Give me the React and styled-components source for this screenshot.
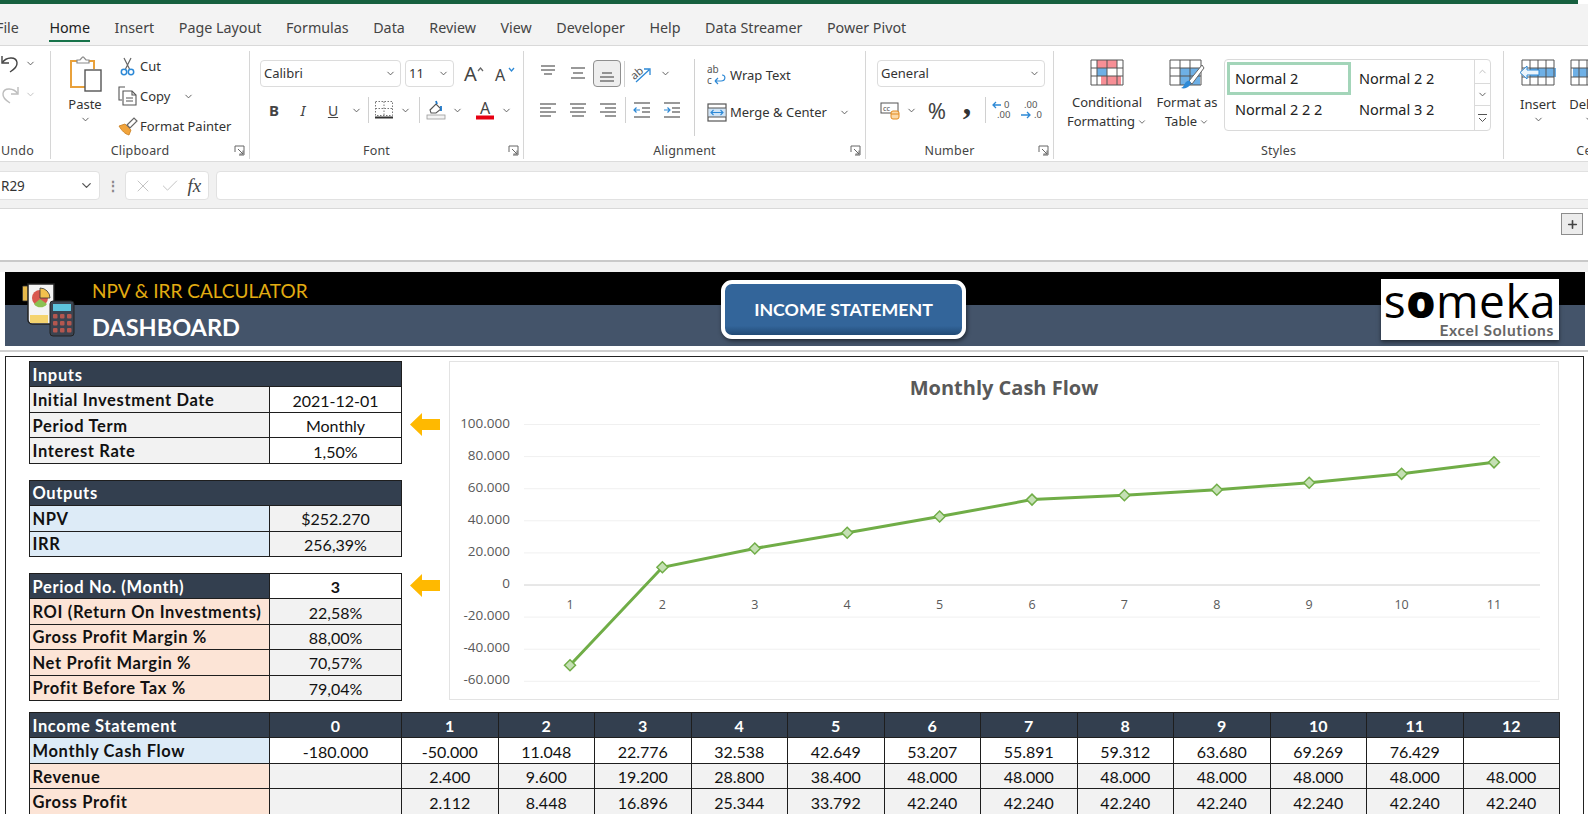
import React from 'react'
import styled, { createGlobalStyle } from 'styled-components'
import { ChevronDown, ChevronUp, X, Check, Plus } from 'lucide-react'

const UI_FONT = '"Noto Sans", "Open Sans", sans-serif'
const SHEET_FONT = 'Lato, "Open Sans", sans-serif'

const GlobalStyle = createGlobalStyle`
  html, body { margin: 0; padding: 0; height: 814px; overflow: hidden; background: #fff; }
  * { box-sizing: border-box; }
`

const Page = styled.div`
  width: 1588px;
  height: 814px;
  overflow: hidden;
  background: #fff;
  font-family: ${UI_FONT};
  color: #333;
`
const TopLine = styled.div`
  height: 4px;
  width: 1578px;
  background: #17603f;
`
const TabBar = styled.div`
  display: flex;
  align-items: center;
  gap: 24.5px;
  height: 42px;
  padding-top: 6px;
  background: #f3f3f3;
  border-bottom: 1px solid #d9d9d9;
  overflow: hidden;
`
const Tab = styled.div`
  position: relative;
  flex: none;
  margin-left: ${p => p.$offset || 0}px;
  font-size: 14.3px;
  line-height: 20px;
  color: ${p => (p.$active ? '#222' : '#444')};
  &::after {
    content: '';
    display: ${p => (p.$active ? 'block' : 'none')};
    position: absolute;
    left: 0;
    right: 0;
    bottom: -4px;
    height: 2px;
    background: #17734a;
  }
`
const Ribbon = styled.div`
  display: flex;
  height: 115px;
  padding: 5px 0 2px;
  background: #fff;
  overflow: hidden;
`
const Group = styled.div`
  flex: none;
  display: flex;
  flex-direction: column;
  width: ${p => p.$width}px;
  border-right: 1px solid ${p => (p.$last ? 'transparent' : '#d6d6d6')};
`
const GroupBody = styled.div`
  flex: 1;
  display: flex;
  min-height: 0;
  padding: ${p => p.$top || 0}px 0 0 ${p => p.$left || 0}px;
`
const GroupFooter = styled.div`
  display: grid;
  grid-template-columns: 1fr auto 1fr;
  align-items: center;
  height: 18px;
  padding-right: ${p => p.$reserve || 0}px;
  font-size: 12.5px;
  color: #444;
`
const FooterLabel = styled.span`
  grid-column: 2;
  letter-spacing: 0.2px;
`
const Launcher = styled.svg`
  grid-column: 3;
  justify-self: end;
  margin-right: -16px;
`
const Stack = styled.div`
  flex: none;
  display: flex;
  flex-direction: column;
  width: ${p => (p.$w ? `${p.$w}px` : 'auto')};
  gap: ${p => p.$gap || 0}px;
`
const IconRow = styled.div`
  display: flex;
  align-items: center;
  height: ${p => p.$height || 24}px;
  margin-top: ${p => p.$top || 0}px;
`
const Slot = styled.div`
  flex: none;
  display: flex;
  align-items: center;
  justify-content: center;
  width: ${p => p.$w}px;
  height: 100%;
  color: #444;
  font-size: ${p => p.$size || 14}px;
`
const PressedSlot = styled(Slot)`
  height: 27px;
  background: #eeeeee;
  border: 1px solid #8f8f8f;
  border-radius: 4px;
`
const CommaMark = styled.span`
  margin-top: -15px;
  font-family: "Liberation Serif", serif;
  font-size: 34px;
  font-weight: 700;
  line-height: 24px;
  color: #333;
`
const Divider = styled.div`
  flex: none;
  width: ${p => p.$w || 8}px;
  height: 26px;
  display: flex;
  justify-content: center;
  &::before { content: ''; width: 1px; background: #d0d0d0; }
`
const SelectBox = styled.div`
  flex: none;
  display: flex;
  align-items: center;
  justify-content: space-between;
  width: ${p => p.$w}px;
  height: 27px;
  margin-right: ${p => p.$mr || 0}px;
  padding: 0 4px 1px 3px;
  background: #fff;
  border: 1px solid #dcdcdc;
  border-radius: 4px;
  font-size: 13px;
  color: #333;
`
const SmallButton = styled.div`
  flex: none;
  display: flex;
  align-items: center;
  height: 30px;
  font-size: 13px;
  color: #333;
  white-space: nowrap;
`
const SmallIcon = styled.span`
  flex: none;
  display: flex;
  justify-content: center;
  width: ${p => p.$w || 25}px;
  margin: 0 ${p => p.$mr || 0}px 0 ${p => p.$ml || 0}px;
`
const TallButton = styled.div`
  flex: none;
  display: flex;
  flex-direction: column;
  align-items: center;
  width: ${p => p.$w}px;
  font-size: 13px;
  line-height: 19px;
  color: #333;
  text-align: center;
  white-space: nowrap;
`
const TallCaption = styled.div`
  margin-top: ${p => p.$top ?? 6}px;
  display: flex;
  align-items: center;
  gap: 2px;
`
const PasteButton = styled(TallButton)`
  margin: 4px 5px 0 9px;
`
const IconHolder = styled.div`
  height: 27px;
  margin-top: 8px;
  display: flex;
  align-items: flex-start;
`
const VerticalRule = styled.div`
  flex: none;
  width: 1px;
  height: 77px;
  margin-top: -1px;
  background: #d0d0d0;
`
const Gallery = styled.div`
  flex: none;
  display: grid;
  grid-template-columns: 1fr 16px;
  width: 267px;
  height: 72px;
  margin: 8px 0 0 2px;
  border: 1px solid #dadada;
  border-radius: 4px;
`
const GalleryGrid = styled.div`
  display: grid;
  grid-template-columns: 124px 1fr;
  grid-template-rows: 33px 30px;
  padding: 2px 0 0 2px;
`
const StyleTile = styled.div`
  display: flex;
  align-items: center;
  padding: 0 0 2px ${p => (p.$selected ? 5 : 8)}px;
  border: ${p => (p.$selected ? '3px solid #a3d5b9' : 'none')};
  font-size: 14.5px;
  color: #222;
`
const GalleryScroll = styled.div`
  display: grid;
  grid-template-rows: 23px 22px 1fr;
  border-left: 1px solid #dadada;
`
const ScrollPart = styled.div`
  display: flex;
  align-items: center;
  justify-content: center;
  color: ${p => (p.$muted ? '#bbb' : '#555')};
  & + & { border-top: 1px solid #dadada; }
`
const FormulaBar = styled.div`
  display: flex;
  align-items: center;
  height: 47px;
  padding-top: 1px;
  background: #f1f1f1;
  border-top: 1px solid #dcdcdc;
  overflow: hidden;
`
const FieldBox = styled.div`
  flex: none;
  display: flex;
  align-items: center;
  height: 29px;
  background: #fff;
  border: 1px solid #e1e1e1;
  border-radius: 4px;
`
const NameBox = styled(FieldBox)`
  justify-content: space-between;
  width: 110px;
  margin-left: -10px;
  padding: 0 5px 0 10px;
  font-size: 13.5px;
`
const GripDots = styled.div`
  flex: none;
  width: 25px;
  text-align: center;
  font-size: 14px;
  font-weight: 700;
  color: #888;
`
const EditBox = styled(FieldBox)`
  justify-content: space-around;
  width: 84px;
  padding: 0 3px;
  margin-right: 7px;
  color: #c4c4c4;
`
const FxLabel = styled.span`
  font-family: "Liberation Serif", serif;
  font-style: italic;
  font-size: 19px;
  color: #444;
`
const FormulaInput = styled(FieldBox)`
  flex: 1;
  margin-right: -10px;
`
const WhiteStrip = styled.div`
  display: flex;
  justify-content: flex-end;
  height: 54px;
  padding: 4px 5px 0 0;
  border-top: 1px solid #d8d8d8;
  border-bottom: 2px solid #c9c9c9;
`
const ExpandButton = styled.div`
  display: flex;
  align-items: center;
  justify-content: center;
  width: 22px;
  height: 22px;
  background: #ececec;
  border: 1px solid #8d8d8d;
  color: #444;
`
const SheetGap = styled.div`
  height: 10px;
  background: #f1f1f1;
`
const SheetHeader = styled.div`
  display: grid;
  grid-template-columns: 70px 629px 245px 1fr;
  align-items: center;
  height: 74px;
  margin: 0 3px 0 5px;
  padding-left: 17px;
  background: linear-gradient(#000 0 33.5px, #44546a 33.5px);
  font-family: ${SHEET_FONT};
`
const TitleColumn = styled.div`
  display: flex;
  flex-direction: column;
  gap: 10px;
  margin-top: 1px;
`
const AppName = styled.div`
  font-size: 19px;
  line-height: 24px;
  color: #e2ac12;
`
const PageName = styled.div`
  font-size: 23.5px;
  line-height: 28px;
  font-weight: 700;
  color: #fff;
`
const NavButton = styled.div`
  display: flex;
  align-items: center;
  justify-content: center;
  width: 245px;
  height: 59px;
  background: linear-gradient(#33659a 0 82%, #214a75);
  border: 4px solid #fff;
  border-radius: 11px;
  box-shadow: 1px 2px 4px rgba(0, 0, 0, 0.5);
  color: #fff;
  font-size: 17.8px;
  font-weight: 700;
`
const Logo = styled.div`
  justify-self: end;
  display: flex;
  flex-direction: column;
  align-items: center;
  width: 178px;
  height: 61px;
  margin-right: 26px;
  background: #fff;
  box-shadow: 0 2px 4px rgba(0, 0, 0, 0.5);
  font-family: "Open Sans", sans-serif;
  color: #000;
`
const LogoWord = styled.div`
  font-size: 46px;
  line-height: 42px;
  letter-spacing: 0.5px;
`
const LogoRing = styled.span`
  font-weight: 800;
`
const LogoTag = styled.div`
  align-self: flex-end;
  margin: 1px 5px 0 0;
  font-family: ${SHEET_FONT};
  font-size: 15.5px;
  line-height: 16px;
  font-weight: 700;
  letter-spacing: 0.7px;
  color: #666;
`
const PanelRule = styled.div`
  height: 2px;
  margin-top: 4px;
  background: #cfcfcf;
`
const Panel = styled.div`
  margin: 4px 4px 0 5px;
  padding: 4px 0 0 23px;
  height: 500px;
  background: #fff;
  border: 1.5px solid #222;
  font-family: ${SHEET_FONT};
  color: #111;
`
const TopArea = styled.div`
  display: flex;
  height: 340px;
`
const SideColumn = styled.div`
  flex: none;
  display: flex;
  flex-direction: column;
  gap: 16.9px;
  width: 420px;
`
const Table = styled.div`
  display: grid;
  grid-template-columns: ${p => p.$columns};
  grid-auto-rows: 25.45px;
`
const toneColors = {
  head: '#333f4f',
  gray: '#f2f2f2',
  blue: '#ddebf7',
  orange: '#fce4d6',
  white: '#fff',
}
const Cell = styled.div`
  grid-column: ${p => (p.$span ? '1 / span 2' : p.$first ? '1' : 'auto')};
  display: flex;
  align-items: center;
  justify-content: ${p => (p.$label ? 'flex-start' : 'center')};
  margin: 0 -1px -1px 0;
  padding: 1px 0 0 ${p => (p.$label ? 2.5 : 0)}px;
  background: ${p => toneColors[p.$tone || 'white']};
  border: 1px solid #1e1e1e;
  color: ${p => (p.$tone === 'head' ? '#fff' : '#111')};
  font-size: ${p => (p.$label ? 16.5 : 16)}px;
  font-weight: ${p => (p.$label || p.$tone === 'head' || p.$bold ? 700 : 400)};
  letter-spacing: ${p => (p.$label ? '0.65px' : '0')};
  white-space: nowrap;
  overflow: hidden;
`
const PointerSlot = styled.div`
  display: flex;
  align-items: center;
  padding-left: 9px;
`
const ChartFrame = styled.div`
  flex: none;
  width: 1110px;
  height: 339px;
  background: #fff;
  border: 1px solid #e3e3e3;
`
const IncomeTable = styled(Table)`
  margin-top: 11px;
`

const Chevron = ({ size = 11, color = '#555' }) => <ChevronDown size={size} color={color} strokeWidth={2} />

const LauncherIcon = () => (
  <Launcher width="11" height="11" viewBox="0 0 11 11" fill="none" stroke="#666" strokeWidth="1">
    <path d="M1 7V1h9v9H5" />
    <path d="M4 4l5 5M9 5.5V9H5.5" />
  </Launcher>
)

const UndoIcon = ({ color }) => (
  <svg width="20" height="21" viewBox="0 0 20 21" fill="none" stroke={color} strokeWidth="1.4">
    <path d="M2 3v7h7" />
    <path d="M2.5 9.5C6 4 16 3 17 9.5c.5 4-3 7-7 9.5" />
  </svg>
)
const RedoIcon = ({ color }) => (
  <svg width="20" height="21" viewBox="0 0 20 21" fill="none" stroke={color} strokeWidth="1.4">
    <path d="M18 3v7h-7" />
    <path d="M17.5 9.5C14 4 4 3 3 9.5c-.5 4 3 7 7 9.5" />
  </svg>
)
const PasteIcon = () => (
  <svg width="33" height="37" viewBox="0 0 33 37" fill="none">
    <path d="M8 6H2v26h14" stroke="#e9a13b" strokeWidth="2" />
    <path d="M20 6h5v8" stroke="#e9a13b" strokeWidth="2" />
    <path d="M8 8V5h3l2.5-3h1L17 5h3v3z" fill="#fff" stroke="#8a8a8a" strokeWidth="1.2" />
    <rect x="16" y="15" width="16" height="21" fill="#fff" stroke="#555" strokeWidth="1.4" />
  </svg>
)
const CutIcon = () => (
  <svg width="15" height="19" viewBox="0 0 15 19" fill="none">
    <path d="M4 1l5.5 11M11 1L5.5 12" stroke="#666" strokeWidth="1.2" />
    <circle cx="4" cy="15" r="2.7" stroke="#2d89d6" strokeWidth="1.5" />
    <circle cx="11" cy="15" r="2.7" stroke="#2d89d6" strokeWidth="1.5" />
  </svg>
)
const CopyIcon = () => (
  <svg width="20" height="20" viewBox="0 0 20 20" fill="none" stroke="#555" strokeWidth="1.1">
    <path d="M7 1H1v13h3" />
    <path d="M5 5h9l4 4v10H5z" fill="#fff" />
    <path d="M14 5v4h4M8 12h7M8 15h7" />
  </svg>
)
const BrushIcon = () => (
  <svg width="20" height="19" viewBox="0 0 20 19" fill="none">
    <path d="M1 9l6-2 6 6-2 5c-4-1-7-4-10-9z" fill="#f1a43c" stroke="#c77b1c" strokeWidth="0.8" />
    <path d="M9 8l7-7 3 3-7 7z" fill="#fff" stroke="#666" strokeWidth="1.2" />
  </svg>
)
const GrowFont = ({ size, up }) => (
  <svg width="22" height="20" viewBox="0 0 22 20">
    <text x="1" y="17" fontFamily="Noto Sans" fontSize={size} fill="#444">A</text>
    <path d={up ? 'M15 7l2.5-3 2.5 3' : 'M15 4l2.5 3 2.5-3'} fill="none" stroke={up ? '#666' : '#2d89d6'} strokeWidth="1.3" />
  </svg>
)
const BorderIcon = () => (
  <svg width="20" height="20" viewBox="0 0 20 20" fill="none">
    <path d="M1.5 1.5h17v14h-17zM10 1.5v14M1.5 8.5h17" stroke="#777" strokeWidth="1" strokeDasharray="1.5 1.5" />
    <path d="M1 17.5h18" stroke="#333" strokeWidth="2" />
  </svg>
)
const FillIcon = () => (
  <svg width="20" height="20" viewBox="0 0 20 20" fill="none">
    <path d="M4 10l6-6 5 5-5 4H5z" fill="#fff" stroke="#555" strokeWidth="1.1" />
    <path d="M10 1l1 3M15 6v5" stroke="#1f78c8" strokeWidth="1.8" />
    <rect x="1" y="15" width="18" height="4" fill="#f4f4f4" stroke="#999" strokeWidth="0.8" />
  </svg>
)
const FontColorIcon = () => (
  <svg width="20" height="20" viewBox="0 0 20 20">
    <text x="10" y="14" textAnchor="middle" fontFamily="Noto Sans" fontSize="16" fill="#444">A</text>
    <rect x="1" y="15.5" width="18" height="4" fill="#e60012" />
  </svg>
)
const LinesIcon = ({ rows, children }) => (
  <svg width="20" height="20" viewBox="0 0 20 20" fill="none" stroke="#555" strokeWidth="1.2">
    {rows.map(([a, b, y]) => <path key={y} d={`M${a} ${y}H${b}`} />)}
    {children}
  </svg>
)
const OrientationIcon = () => (
  <svg width="22" height="20" viewBox="0 0 22 20" fill="none">
    <text x="0" y="13" transform="rotate(-40 6 10)" fontFamily="Noto Sans" fontSize="11" fill="#555">ab</text>
    <path d="M5 18L18 6M13 5h6v6" stroke="#2d89d6" strokeWidth="1.3" />
  </svg>
)
const WrapIcon = () => (
  <svg width="20" height="22" viewBox="0 0 20 22" fill="none">
    <text x="0" y="9" fontFamily="Noto Sans" fontSize="10" fill="#555">ab</text>
    <text x="0" y="20" fontFamily="Noto Sans" fontSize="10" fill="#555">c</text>
    <path d="M8 17h6c5 0 5-6 1-6M8 17l3-3M8 17l3 3" stroke="#2d89d6" strokeWidth="1.2" />
  </svg>
)
const MergeIcon = () => (
  <svg width="20" height="19" viewBox="0 0 20 19" fill="none">
    <rect x="1" y="1" width="18" height="17" stroke="#555" strokeWidth="1.2" />
    <rect x="1.5" y="5" width="17" height="9" fill="#cfe4f7" />
    <path d="M1 5h18M1 14h18" stroke="#555" />
    <path d="M4 9.5h12M6.5 7L4 9.5 6.5 12M13.5 7l2.5 2.5-2.5 2.5" stroke="#2d89d6" strokeWidth="1.1" />
  </svg>
)
const AccountingIcon = () => (
  <svg width="20" height="20" viewBox="0 0 20 20" fill="none">
    <rect x="1" y="3" width="17" height="10" fill="#fff" stroke="#555" />
    <text x="3" y="11" fontFamily="Noto Sans" fontSize="7.5" fill="#555">cc</text>
    <rect x="11" y="11" width="8" height="8" rx="2" fill="#fbd9a8" stroke="#e38a1c" />
    <path d="M11 14h8" stroke="#e38a1c" />
  </svg>
)
const DecimalIcon = ({ grow }) => (
  <svg width="24" height="22" viewBox="0 0 24 22" fontFamily="Noto Sans" fontSize="9.5" fill="#555">
    {grow ? (
      <>
        <text x="13" y="9">0</text>
        <text x="6" y="19">.00</text>
        <path d="M10 6H2M5 3L2 6l3 3" fill="none" stroke="#2d89d6" strokeWidth="1.3" />
      </>
    ) : (
      <>
        <text x="5" y="9">.00</text>
        <text x="15" y="19">.0</text>
        <path d="M2 16h9M8 13l3 3-3 3" fill="none" stroke="#2d89d6" strokeWidth="1.3" />
      </>
    )}
  </svg>
)
const CondFormatIcon = () => (
  <svg width="34" height="27" viewBox="0 0 34 27" fill="none">
    <rect x="7" y="1" width="20" height="8" fill="#f78f96" />
    <rect x="11" y="17" width="20" height="9" fill="#f78f96" />
    <rect x="7" y="9" width="10" height="8" fill="#6eb0e6" />
    <path d="M1 1h32v25H1zM1 9h32M1 17h32M7 1v25M17 1v25M27 1v25" stroke="#555" strokeWidth="1" />
  </svg>
)
const FormatTableIcon = () => (
  <svg width="36" height="32" viewBox="0 0 36 32" fill="none">
    <rect x="11" y="9" width="20" height="17" fill="#6eb0e6" />
    <path d="M1 1h31v25H1zM1 9h31M1 17h31M11 1v25M21 1v25" stroke="#555" strokeWidth="1" />
    <path d="M33 6L20 22l3 3L35 9z" fill="#fff" stroke="#666" />
    <path d="M17 23c3-3 6 0 4 3s-6 4-9 3c3-1 3-4 5-6z" fill="#2d89d6" />
  </svg>
)
const InsertCellsIcon = () => (
  <svg width="38" height="27" viewBox="0 0 38 27" fill="none">
    <rect x="11" y="9" width="26" height="9" fill="#6eb0e6" />
    <path d="M3 1h32v25H3zM3 9h32M3 18h32M11 1v25M19 1v25M27 1v25" stroke="#555" strokeWidth="1" />
    <path d="M1 13.5L8 7v4h12v5H8v4z" fill="#eaf4fc" stroke="#2d89d6" />
  </svg>
)
const DeleteCellsIcon = () => (
  <svg width="38" height="27" viewBox="0 0 38 27" fill="none">
    <rect x="3" y="9" width="26" height="9" fill="#6eb0e6" />
    <path d="M1 1h32v25H1zM1 9h32M1 18h32M9 1v25M17 1v25M25 1v25" stroke="#555" strokeWidth="1" />
  </svg>
)
const SheetIcon = () => (
  <svg width="54" height="55" viewBox="0 0 54 55">
    <rect x="0.5" y="4" width="6" height="15" rx="1" fill="#e7b94b" stroke="#333" strokeWidth="0.8" />
    <path d="M6 2h26v40H10c-2 0-4-2-4-4z" fill="#f4f4f4" stroke="#222" strokeWidth="1.5" />
    <circle cx="18" cy="16" r="8" fill="#d9574e" />
    <path d="M18 16V6a10 10 0 0 1 10 10z" fill="#f2c14e" stroke="#333" strokeWidth="0.8" />
    <path d="M12 22a8 8 0 0 0 13 0l-7-5z" fill="#8cc152" />
    <rect x="8" y="33" width="18" height="8" fill="#f5d46f" />
    <rect x="28" y="19" width="24" height="35" rx="3" fill="#3b4350" stroke="#222" />
    <rect x="31" y="22" width="18" height="7" fill="#5ec4de" />
    {[0, 1, 2].map(r =>
      [0, 1, 2].map(c => <rect key={`${r}${c}`} x={31 + c * 7} y={32 + r * 7} width="4.5" height="4.5" rx="1" fill="#b3574f" />)
    )}
  </svg>
)
const PointerIcon = () => (
  <svg width="30" height="23" viewBox="0 0 30 23">
    <path d="M0 11.5L12 0v6h18v11H12v6z" fill="#ffb900" />
  </svg>
)

const cashFlow = [-50000, 11048, 22776, 32538, 42649, 53207, 55891, 59312, 63680, 69269, 76429]
const axisTicks = [100000, 80000, 60000, 40000, 20000, 0, -20000, -40000, -60000]
const ZERO_Y = 223
const xAt = i => 120 + i * 92.4
const yAt = v => ZERO_Y - (v / 20000) * 32.1
const formatTick = v => String(v).replace(/\B(?=(\d{3})+(?!\d))/g, '.')

const CashFlowChart = () => (
  <svg width="1108" height="337" viewBox="0 0 1108 337" fontFamily="Open Sans">
    <text x="554" y="33" textAnchor="middle" fontSize="20" fontWeight="700" fill="#595959">Monthly Cash Flow</text>
    {axisTicks.map(t => (
      <g key={t}>
        <line x1="74" x2="1090" y1={yAt(t)} y2={yAt(t)} stroke={t === 0 ? '#d0d0d0' : '#f0f0f0'} />
        <text x="60" y={yAt(t) + 3} textAnchor="end" fontSize="13.5" fill="#595959">{formatTick(t)}</text>
      </g>
    ))}
    {cashFlow.map((_, i) => (
      <text key={i} x={xAt(i)} y={ZERO_Y + 24} textAnchor="middle" fontSize="12.5" fill="#595959">{i + 1}</text>
    ))}
    <polyline points={cashFlow.map((v, i) => `${xAt(i)},${yAt(v)}`).join(' ')} fill="none" stroke="#70ad47" strokeWidth="3" />
    {cashFlow.map((v, i) => {
      const x = xAt(i)
      const y = yAt(v)
      return <path key={i} d={`M${x - 5.5} ${y}L${x} ${y - 5.5}L${x + 5.5} ${y}L${x} ${y + 5.5}Z`} fill="#c5e0b4" stroke="#70ad47" strokeWidth="1.5" />
    })}
  </svg>
)

const INFO_COLUMNS = '240px 132px 49px'
const incomeRows = [
  { label: 'Monthly Cash Flow', tone: 'blue', valueTone: 'white', values: ['-180.000', '-50.000', '11.048', '22.776', '32.538', '42.649', '53.207', '55.891', '59.312', '63.680', '69.269', '76.429', ''] },
  { label: 'Revenue', tone: 'orange', valueTone: 'gray', values: ['', '2.400', '9.600', '19.200', '28.800', '38.400', '48.000', '48.000', '48.000', '48.000', '48.000', '48.000', '48.000'] },
  { label: 'Gross Profit', tone: 'orange', valueTone: 'gray', values: ['', '2.112', '8.448', '16.896', '25.344', '33.792', '42.240', '42.240', '42.240', '42.240', '42.240', '42.240', '42.240'] },
]
const ratioRows = [
  ['ROI (Return On Investments)', '22,58%'],
  ['Gross Profit Margin %', '88,00%'],
  ['Net Profit Margin %', '70,57%'],
  ['Profit Before Tax %', '79,04%'],
]
const tabs = ['Insert', 'Page Layout', 'Formulas', 'Data', 'Review', 'View', 'Developer', 'Help', 'Data Streamer', 'Power Pivot']

const InfoRow = ({ label, value, tone, valueTone, pointer, bold }) => (
  <>
    <Cell $first $label $tone={tone}>{label}</Cell>
    <Cell $tone={valueTone} $bold={bold}>{value}</Cell>
    {pointer && <PointerSlot><PointerIcon /></PointerSlot>}
  </>
)

export default function App() {
  return (
    <Page>
      <GlobalStyle />
      <TopLine />
      <TabBar>
        <Tab $offset={-4}>File</Tab>
        <Tab $offset={6} $active>Home</Tab>
        {tabs.map(t => <Tab key={t}>{t}</Tab>)}
      </TabBar>
      <Ribbon>
        <Group $width={51}>
          <GroupBody>
            <Stack $gap={7}>
              <IconRow><Slot $w={20}><UndoIcon color="#444" /></Slot><Slot $w={20}><Chevron /></Slot></IconRow>
              <IconRow><Slot $w={20}><RedoIcon color="#bdbdbd" /></Slot><Slot $w={20}><Chevron color="#bdbdbd" /></Slot></IconRow>
            </Stack>
          </GroupBody>
          <GroupFooter $reserve={15}><FooterLabel>Undo</FooterLabel></GroupFooter>
        </Group>
        <Group $width={199}>
          <GroupBody>
            <PasteButton $w={50}>
              <PasteIcon />
              <TallCaption $top={3}>Paste</TallCaption>
              <Chevron />
            </PasteButton>
            <Stack>
              <SmallButton><SmallIcon><CutIcon /></SmallIcon>Cut</SmallButton>
              <SmallButton><SmallIcon><CopyIcon /></SmallIcon>Copy<SmallIcon $w={36}><Chevron /></SmallIcon></SmallButton>
              <SmallButton><SmallIcon><BrushIcon /></SmallIcon>Format Painter</SmallButton>
            </Stack>
          </GroupBody>
          <GroupFooter $reserve={20}><FooterLabel>Clipboard</FooterLabel><LauncherIcon /></GroupFooter>
        </Group>
        <Group $width={274}>
          <GroupBody $top={9} $left={10}>
            <Stack>
              <IconRow $height={27}>
                <SelectBox $w={141} $mr={4}>Calibri<Chevron /></SelectBox>
                <SelectBox $w={49} $mr={7}>11<Chevron /></SelectBox>
                <Slot $w={26}><GrowFont size={20} up /></Slot>
                <Slot $w={6} />
                <Slot $w={24}><GrowFont size={16} /></Slot>
              </IconRow>
              <IconRow $top={11}>
                <Slot $w={28} $size={15}><b>B</b></Slot>
                <Slot $w={30} $size={15}><i>I</i></Slot>
                <Slot $w={30} $size={14}><u>U</u></Slot>
                <Slot $w={16}><Chevron /></Slot>
                <Divider />
                <Slot $w={24}><BorderIcon /></Slot>
                <Slot $w={18}><Chevron /></Slot>
                <Divider $w={10} />
                <Slot $w={24}><FillIcon /></Slot>
                <Slot $w={18}><Chevron /></Slot>
                <Slot $w={6} />
                <Slot $w={26}><FontColorIcon /></Slot>
                <Slot $w={16}><Chevron /></Slot>
              </IconRow>
            </Stack>
          </GroupBody>
          <GroupFooter $reserve={20}><FooterLabel>Font</FooterLabel><LauncherIcon /></GroupFooter>
        </Group>
        <Group $width={342}>
          <GroupBody $top={9} $left={9}>
            <Stack $w={161}>
              <IconRow $height={27}>
                <Slot $w={30}><LinesIcon rows={[[3, 17, 2], [3, 17, 6], [6, 14, 10]]} /></Slot>
                <Slot $w={30}><LinesIcon rows={[[3, 17, 4], [5, 15, 9], [3, 17, 14]]} /></Slot>
                <PressedSlot $w={28}><LinesIcon rows={[[5, 15, 9], [3, 17, 13], [3, 17, 17]]} /></PressedSlot>
                <Divider $w={6} />
                <Slot $w={30}><OrientationIcon /></Slot>
                <Slot $w={16}><Chevron /></Slot>
              </IconRow>
              <IconRow $top={11}>
                <Slot $w={30}><LinesIcon rows={[[2, 18, 4], [2, 13, 8], [2, 18, 12], [2, 13, 16]]} /></Slot>
                <Slot $w={30}><LinesIcon rows={[[2, 18, 4], [4, 16, 8], [2, 18, 12], [4, 16, 16]]} /></Slot>
                <Slot $w={30}><LinesIcon rows={[[2, 18, 4], [7, 18, 8], [2, 18, 12], [7, 18, 16]]} /></Slot>
                <Divider $w={4} />
                <Slot $w={30}>
                  <LinesIcon rows={[[2, 18, 3], [10, 18, 8], [10, 18, 12], [2, 18, 17]]}>
                    <path d="M8 10H2M4.5 7.5L2 10l2.5 2.5" stroke="#2d89d6" />
                  </LinesIcon>
                </Slot>
                <Slot $w={30}>
                  <LinesIcon rows={[[2, 18, 3], [10, 18, 8], [10, 18, 12], [2, 18, 17]]}>
                    <path d="M2 10h6M5.5 7.5L8 10l-2.5 2.5" stroke="#2d89d6" />
                  </LinesIcon>
                </Slot>
              </IconRow>
            </Stack>
            <VerticalRule />
            <Stack $gap={7}>
              <SmallButton><SmallIcon $w={26} $ml={9}><WrapIcon /></SmallIcon>Wrap Text</SmallButton>
              <SmallButton><SmallIcon $w={26} $ml={9}><MergeIcon /></SmallIcon>Merge &amp; Center<SmallIcon $w={36}><Chevron /></SmallIcon></SmallButton>
            </Stack>
          </GroupBody>
          <GroupFooter $reserve={20}><FooterLabel>Alignment</FooterLabel><LauncherIcon /></GroupFooter>
        </Group>
        <Group $width={188}>
          <GroupBody $top={9} $left={11}>
            <Stack>
              <IconRow $height={27}><SelectBox $w={168}>General<Chevron /></SelectBox></IconRow>
              <IconRow $top={11}>
                <Slot $w={26}><AccountingIcon /></Slot>
                <Slot $w={16}><Chevron /></Slot>
                <Slot $w={3} />
                <Slot $w={30} $size={22}>%</Slot>
                <Slot $w={30}><CommaMark>,</CommaMark></Slot>
                <Divider $w={6} />
                <Slot $w={29}><DecimalIcon grow /></Slot>
                <Slot $w={28}><DecimalIcon /></Slot>
              </IconRow>
            </Stack>
          </GroupBody>
          <GroupFooter $reserve={20}><FooterLabel>Number</FooterLabel><LauncherIcon /></GroupFooter>
        </Group>
        <Group $width={450}>
          <GroupBody $left={8}>
            <TallButton $w={90}>
              <IconHolder><CondFormatIcon /></IconHolder>
              <TallCaption $top={7}>Conditional</TallCaption>
              <TallCaption $top={0}>Formatting <Chevron size={10} /></TallCaption>
            </TallButton>
            <TallButton $w={70}>
              <IconHolder><FormatTableIcon /></IconHolder>
              <TallCaption $top={7}>Format as</TallCaption>
              <TallCaption $top={0}>Table <Chevron size={10} /></TallCaption>
            </TallButton>
            <Gallery>
              <GalleryGrid>
                <StyleTile $selected>Normal 2</StyleTile>
                <StyleTile>Normal 2 2</StyleTile>
                <StyleTile>Normal 2 2 2</StyleTile>
                <StyleTile>Normal 3 2</StyleTile>
              </GalleryGrid>
              <GalleryScroll>
                <ScrollPart $muted><ChevronUp size={11} /></ScrollPart>
                <ScrollPart><ChevronDown size={11} /></ScrollPart>
                <ScrollPart>
                  <svg width="11" height="11" viewBox="0 0 11 11" fill="none" stroke="#555"><path d="M1 1.5h9M2 5l3.5 3.5L9 5" /></svg>
                </ScrollPart>
              </GalleryScroll>
            </Gallery>
          </GroupBody>
          <GroupFooter><FooterLabel>Styles</FooterLabel></GroupFooter>
        </Group>
        <Group $width={174} $last>
          <GroupBody $left={10}>
            <TallButton $w={48}>
              <IconHolder><InsertCellsIcon /></IconHolder>
              <TallCaption $top={9}>Insert</TallCaption>
              <Chevron />
            </TallButton>
            <TallButton $w={54}>
              <IconHolder><DeleteCellsIcon /></IconHolder>
              <TallCaption $top={9}>Delete</TallCaption>
              <Chevron />
            </TallButton>
          </GroupBody>
          <GroupFooter><FooterLabel>Cells</FooterLabel></GroupFooter>
        </Group>
      </Ribbon>
      <FormulaBar>
        <NameBox>R29<ChevronDown size={15} color="#555" /></NameBox>
        <GripDots>⋮</GripDots>
        <EditBox>
          <X size={20} strokeWidth={1.2} />
          <Check size={20} strokeWidth={1.2} />
          <FxLabel>fx</FxLabel>
        </EditBox>
        <FormulaInput />
      </FormulaBar>
      <WhiteStrip>
        <ExpandButton><Plus size={13} strokeWidth={3} /></ExpandButton>
      </WhiteStrip>
      <SheetGap />
      <SheetHeader>
        <SheetIcon />
        <TitleColumn>
          <AppName>NPV &amp; IRR CALCULATOR</AppName>
          <PageName>DASHBOARD</PageName>
        </TitleColumn>
        <NavButton>INCOME STATEMENT</NavButton>
        <Logo>
          <LogoWord>s<LogoRing>o</LogoRing>meka</LogoWord>
          <LogoTag>Excel Solutions</LogoTag>
        </Logo>
      </SheetHeader>
      <PanelRule />
      <Panel>
        <TopArea>
          <SideColumn>
            <Table $columns={INFO_COLUMNS}>
              <Cell $span $label $tone="head">Inputs</Cell>
              <InfoRow label="Initial Investment Date" tone="gray" value="2021-12-01" />
              <InfoRow label="Period Term" tone="gray" value="Monthly" pointer />
              <InfoRow label="Interest Rate" tone="gray" value="1,50%" />
            </Table>
            <Table $columns={INFO_COLUMNS}>
              <Cell $span $label $tone="head">Outputs</Cell>
              <InfoRow label="NPV" tone="blue" value="$252.270" valueTone="gray" />
              <InfoRow label="IRR" tone="blue" value="256,39%" valueTone="gray" />
            </Table>
            <Table $columns={INFO_COLUMNS}>
              <InfoRow label="Period No. (Month)" tone="head" value="3" bold pointer />
              {ratioRows.map(([label, value]) => (
                <InfoRow key={label} label={label} tone="orange" value={value} valueTone="gray" />
              ))}
            </Table>
          </SideColumn>
          <ChartFrame><CashFlowChart /></ChartFrame>
        </TopArea>
        <IncomeTable $columns="240px 132px repeat(12, 96.5px)">
          <Cell $label $tone="head">Income Statement</Cell>
          {Array.from({ length: 13 }, (_, i) => <Cell key={i} $tone="head">{i}</Cell>)}
          {incomeRows.map(row => (
            <React.Fragment key={row.label}>
              <Cell $label $tone={row.tone}>{row.label}</Cell>
              {row.values.map((v, i) => <Cell key={i} $tone={row.valueTone}>{v}</Cell>)}
            </React.Fragment>
          ))}
        </IncomeTable>
      </Panel>
    </Page>
  )
}
